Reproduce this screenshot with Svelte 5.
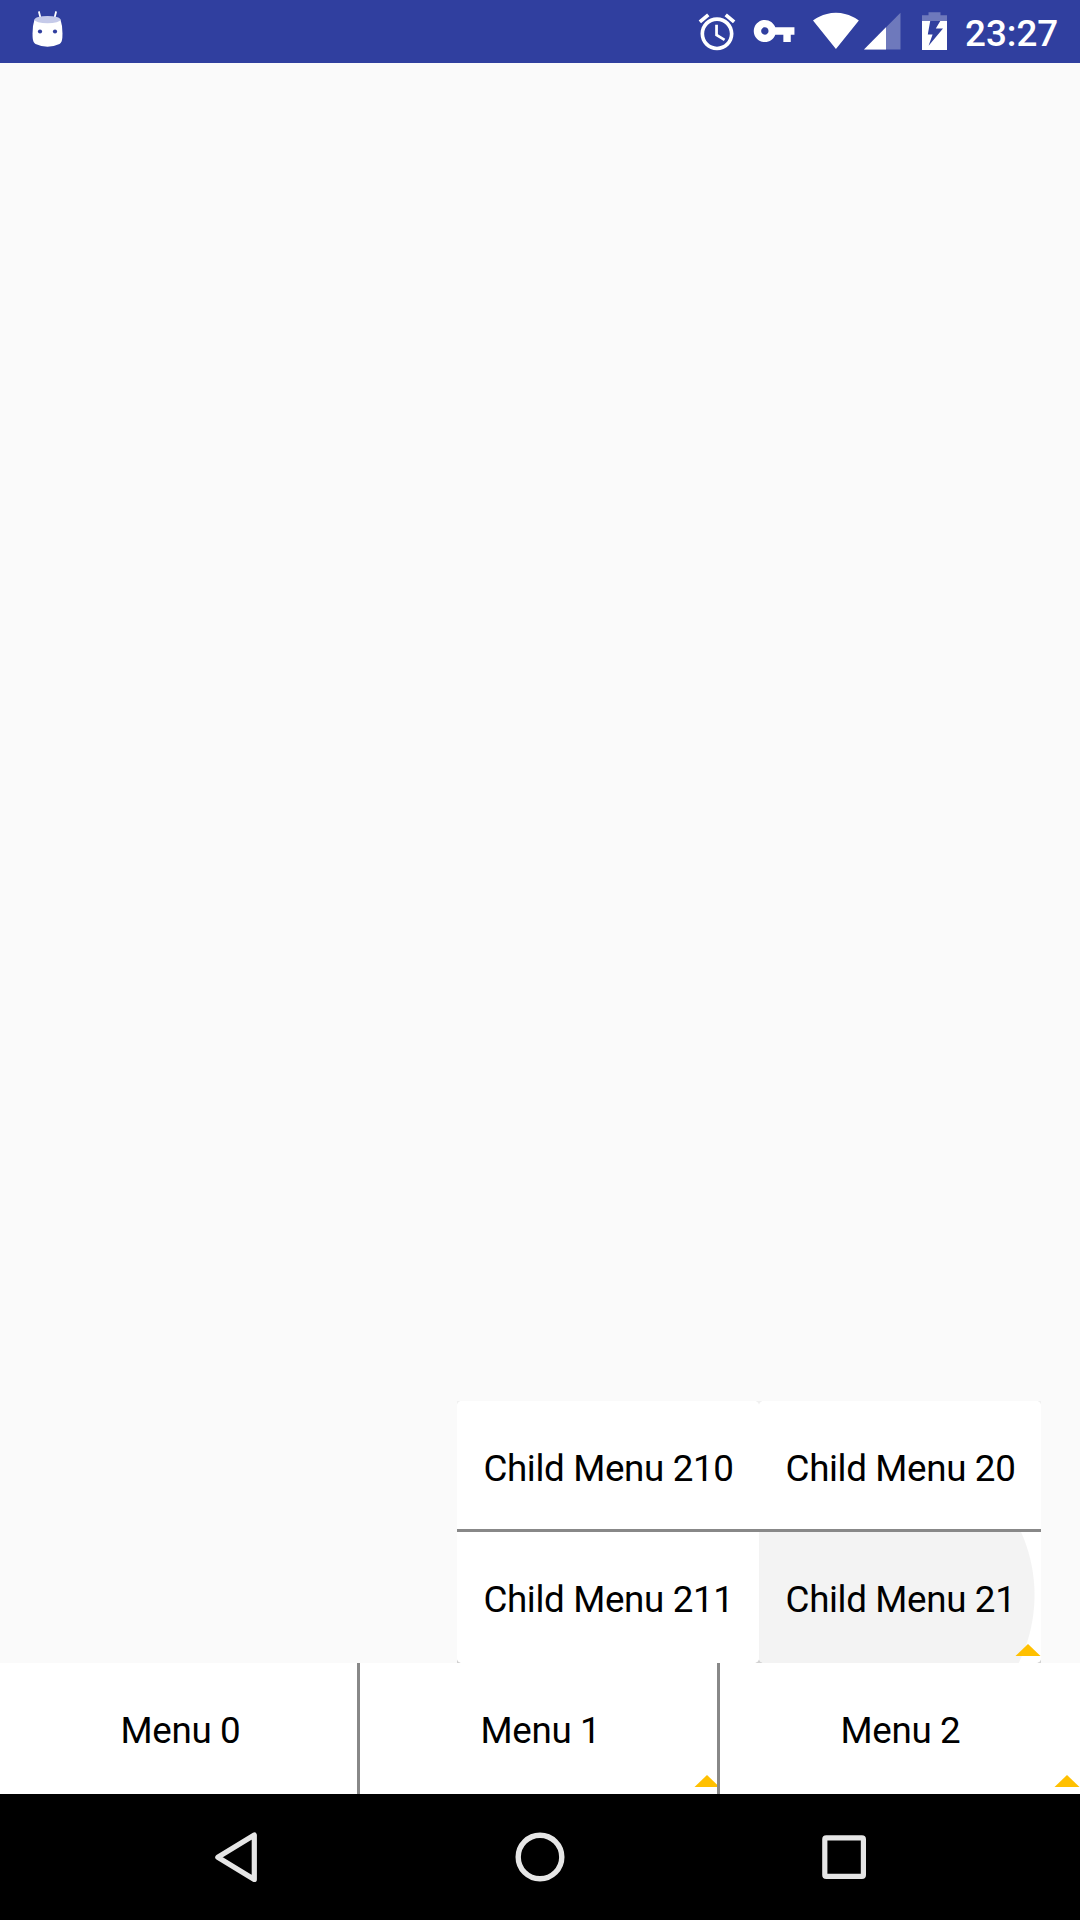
<script>
  const menus = [
    { label: 'Menu 0', more: false },
    { label: 'Menu 1', more: true },
    { label: 'Menu 2', more: true }
  ];
  const columns = [
    [{ label: 'Child Menu 210' }, { label: 'Child Menu 211' }],
    [{ label: 'Child Menu 20' }, { label: 'Child Menu 21', more: true, pressed: true }]
  ];
</script>

{#snippet arrow()}
  <svg class="arrow" width="26" height="12" viewBox="0 0 26 12"><path d="M0.5 12 13 0 25.5 12Z" fill="#ffc000" /></svg>
{/snippet}

<div class="screen">
  <header class="status">
    <svg class="robot" width="34" height="40" viewBox="30 9 34 40">
      <path d="M39 12 40.5 18M56 12 54.500 18" stroke="#fff" stroke-width="1.8" stroke-linecap="round" />
      <path d="M34.500 19.500Q32 27 32.700 38Q33 42.500 35.500 44Q47.500 49.500 59.500 44Q62 42.500 62.300 38Q63 27 60.500 19.500Z" fill="#fff" />
      <ellipse cx="47.500" cy="19.600" rx="13" ry="3.700" fill="#c5cae9" />
      <circle cx="40" cy="31.500" r="2.100" fill="#303f9f" />
      <circle cx="55" cy="31.500" r="2.100" fill="#303f9f" />
    </svg>
    <div class="indicators">
      <svg width="44" height="44" viewBox="0 0 24 24" class="alarm"><path fill="#fff" d="M22 5.720l-4.600-3.860-1.290 1.530 4.600 3.860L22 5.720zM7.880 3.390L6.600 1.860 2 5.710l1.290 1.530 4.590-3.850zM12.500 8H11v6l4.750 2.850.75-1.230-4-2.370V8zM12 4c-4.970 0-9 4.030-9 9s4.020 9 9 9c4.970 0 9-4.030 9-9s-4.030-9-9-9zm0 16c-3.870 0-7-3.130-7-7s3.130-7 7-7 7 3.130 7 7-3.130 7-7 7z" /></svg>
      <svg width="46" height="44" viewBox="751 9 46 44"><path transform="translate(751.9 8.800) scale(1.850)" fill="#fff" d="M12.650 10C11.830 7.670 9.610 6 7 6c-3.310 0-6 2.690-6 6s2.690 6 6 6c2.610 0 4.830-1.670 5.650-4H17v4h4v-4h2v-4H12.650zM7 14c-1.100 0-2-.9-2-2s.9-2 2-2 2 .9 2 2-.9 2-2 2z" /></svg>
      <svg width="50" height="44" viewBox="811 9 50 44"><path transform="translate(812.300 6.900) scale(1.970 1.960)" fill="#fff" d="M12.010 21.490L23.640 7c-.45-.34-4.930-4-11.640-4C5.280 3 .81 6.660.36 7l11.630 14.490z" /></svg>
      <svg width="40" height="44" viewBox="862 9 40 44">
        <path d="M864 49.500 900.500 12.700V49.500Z" fill="#fff" fill-opacity=".3" />
        <path d="M864 49.500 886 27.300V49.500Z" fill="#fff" />
      </svg>
      <svg width="30" height="44" viewBox="920 9 30 44">
        <path d="M922 21V15.200H928.500V12.300H940.500V15.200H947V21Z" fill="#fff" fill-opacity=".3" />
        <path fill-rule="evenodd" d="M922 21H947V50H922ZM930.200 21 927.800 34.400H932.600L928.600 45.800 943 28.400H935.800L940.300 21Z" fill="#fff" />
      </svg>
      <span class="time">23:27</span>
    </div>
  </header>

  <main class="content">
    <div class="popup">
      {#each columns as column}
        <div class="column">
          {#each column as item}
            <button class="cell" class:pressed={item.pressed}>
              <span class="label">{item.label}</span>
              {#if item.more}{@render arrow()}{/if}
            </button>
          {/each}
        </div>
      {/each}
    </div>
  </main>

  <nav class="menubar">
    {#each menus as menu}
      <button class="menu">
        <span class="label">{menu.label}</span>
        {#if menu.more}{@render arrow()}{/if}
      </button>
    {/each}
  </nav>

  <footer class="system">
    <svg width="60" height="60" viewBox="606 1827 60 60"><path d="M617.800 1857.300 654.300 1835V1879.500Z" fill="none" stroke="#e6e6e6" stroke-width="5.200" stroke-linejoin="round" /></svg>
    <svg width="60" height="60" viewBox="510 1827 60 60"><circle cx="540" cy="1857" r="21.800" fill="none" stroke="#e6e6e6" stroke-width="5.400" /></svg>
    <svg width="60" height="60" viewBox="814 1827 60 60"><rect x="824.800" y="1837.800" width="38.600" height="38.600" rx="1.500" fill="none" stroke="#e6e6e6" stroke-width="5.200" /></svg>
  </footer>
</div>

<style>
  :global(body) {
    margin: 0;
  }
  .screen {
    width: 1080px;
    height: 1920px;
    display: flex;
    flex-direction: column;
    background: #fafafa;
    font-family: Roboto, sans-serif;
    font-size: 36.750px;
    color: #000;
    overflow: hidden;
  }
  svg {
    display: block;
    flex: none;
  }
  .status {
    height: 63px;
    flex: none;
    box-sizing: border-box;
    padding: 9px 22px 0 30px;
    display: flex;
    justify-content: space-between;
    align-items: flex-start;
    background: #303f9f;
  }
  .indicators {
    display: flex;
    align-items: flex-start;
  }
  .indicators svg:nth-child(2) {
    margin-left: 12px;
  }
  .indicators svg:nth-child(3) {
    margin-left: 14px;
  }
  .indicators svg:nth-child(4) {
    margin-left: 1px;
  }
  .indicators svg:nth-child(5) {
    margin-left: 18px;
  }
  .alarm {
    margin-top: 1px;
  }
  .time {
    width: 93px;
    margin-left: 15px;
    margin-top: 3px;
    line-height: 44px;
    font-size: 36.750px;
    font-weight: 500;
    color: #fff;
    white-space: nowrap;
  }
  .content {
    flex: 1;
    display: flex;
    justify-content: flex-end;
    align-items: flex-end;
    padding-right: 39px;
  }
  .popup {
    display: grid;
    grid-template-columns: 302px 282px;
    background: linear-gradient(#f0f0f0 50%, #d2d2d2 50%);
  }
  .column {
    border-radius: 5px;
    overflow: hidden;
    background: #fff;
  }
  button {
    position: relative;
    display: flex;
    align-items: center;
    justify-content: center;
    height: 131px;
    box-sizing: border-box;
    margin: 0;
    padding: 0;
    border: 0;
    border-radius: 0;
    background: #fff;
    font: inherit;
    color: inherit;
    white-space: nowrap;
  }
  .label {
    padding: 3px 0 0 1px;
    letter-spacing: -0.350px;
  }
  .cell {
    width: 100%;
  }
  .cell:first-child {
    box-shadow: inset 0 -3px #888;
  }
  .pressed {
    background: radial-gradient(circle 154px at 121.500px 63px, #f3f3f3 153.500px, #fff 154.500px);
  }
  .menubar {
    display: grid;
    grid-template-columns: repeat(3, 1fr);
    flex: none;
  }
  .menu:not(:last-child)::after {
    content: '';
    position: absolute;
    top: 0;
    right: 0;
    width: 3px;
    height: 100%;
    background: #888;
  }
  .arrow {
    position: absolute;
    right: 0;
    bottom: 7px;
  }
  .system {
    height: 126px;
    flex: none;
    box-sizing: border-box;
    padding: 0 206px;
    display: flex;
    justify-content: space-between;
    align-items: center;
    background: #000;
  }
</style>
